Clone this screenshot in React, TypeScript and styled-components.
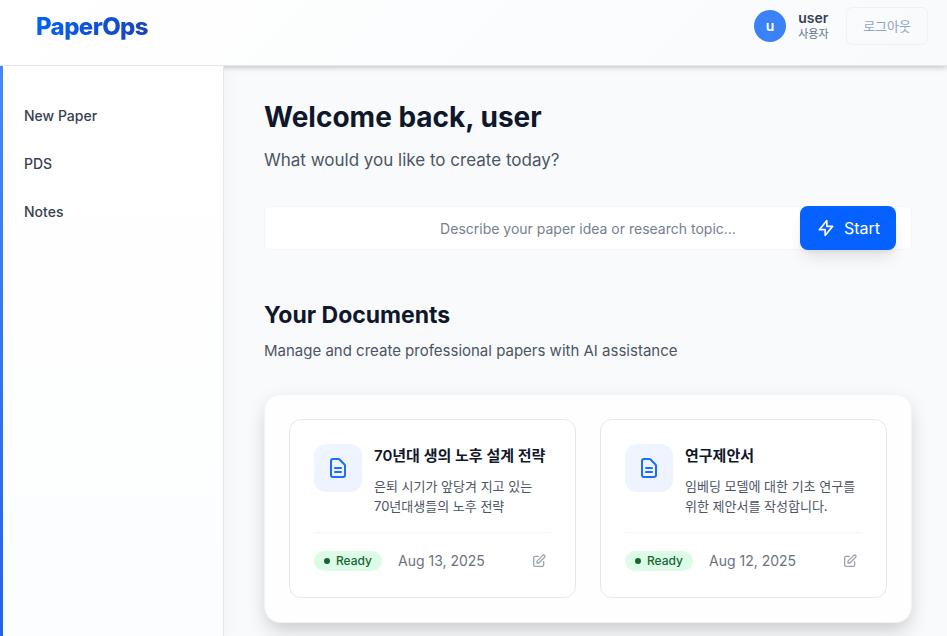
import React from "react";
import styled, { createGlobalStyle } from "styled-components";

const GlobalStyle = createGlobalStyle`
  *, *::before, *::after { box-sizing: border-box; }
  body {
    margin: 0;
    background: #f9fafc;
    color: #0f172a;
    font-family: Inter, "Noto Sans CJK KR", sans-serif;
    font-size: 14px;
    line-height: 20px;
  }
  h1, h2, h3, p { margin: 0; }
  button, input { font: inherit; }
`;

const Shell = styled.div`
  min-height: 100vh;
  display: flex;
  flex-direction: column;
`;

const Header = styled.header`
  display: flex;
  align-items: flex-start;
  justify-content: space-between;
  height: 66px;
  padding: 7px 19px 0 36px;
  background: linear-gradient(135deg, #ffffff 0%, #f8fafc 100%);
  border-bottom: 1px solid #e2e8f0;
  box-shadow: 0 1px 6px rgba(0, 0, 0, 0.25);
`;

const Logo = styled.a`
  font-size: 24px;
  line-height: 32px;
  margin-top: 4px;
  font-weight: 800;
  letter-spacing: -0.025em;
  text-decoration: none;
  color: transparent;
  background: linear-gradient(135deg, #0066ff 0%, #1e40af 100%);
  background-clip: text;
  -webkit-background-clip: text;
`;

const Account = styled.div`
  display: flex;
  align-items: center;
`;

const Avatar = styled.div`
  display: grid;
  place-items: center;
  width: 32px;
  height: 32px;
  margin-right: 12px;
  border-radius: 50%;
  background: #3b82f6;
  color: #fff;
  font-weight: 600;
`;

const Identity = styled.div`
  display: flex;
  flex-direction: column;
  min-width: 32px;
  margin-right: 16px;
`;

const UserName = styled.span`
  line-height: 16px;
  font-weight: 600;
  color: #334155;
`;

const Role = styled.span`
  font-size: 11px;
  line-height: 16px;
  color: #64748b;
`;

const LogoutButton = styled.button`
  height: 38px;
  padding: 0 16px;
  border: 1px solid #eef2f7;
  border-radius: 6px;
  background: transparent;
  color: #94a3c4;
  font-size: 13px;
  white-space: nowrap;
`;

const Body = styled.div`
  flex: 1;
  display: flex;
`;

const Sidebar = styled.nav`
  position: relative;
  flex: 0 0 224px;
  display: flex;
  flex-direction: column;
  gap: 8px;
  padding: 30px 12px 0 12px;
  border-right: 1px solid #e2e8f0;
  background:
    linear-gradient(180deg, #4488f7, #2563eb) left / 3px 100% no-repeat,
    linear-gradient(180deg, #ffffff, #fcfdfe);
  box-shadow: 4px 0 16px rgba(0, 0, 0, 0.03);
  clip-path: inset(0 -24px 0 0);
`;

const NavLink = styled.a`
  padding: 10px 12px;
  border-radius: 8px;
  font-weight: 500;
  color: #374151;
  text-decoration: none;
`;

const Main = styled.main`
  flex: 1;
  min-width: 0;
  padding: 31px 35px 12px 40px;
`;

const PageTitle = styled.h1`
  font-size: 28px;
  line-height: 40px;
  font-weight: 700;
`;

const Lead = styled.p`
  margin-top: 9px;
  font-size: 17px;
  line-height: 28px;
  color: #4b5563;
`;

const PromptForm = styled.form`
  display: grid;
  align-items: center;
  margin-top: 32px;
`;

const PromptInput = styled.input`
  grid-area: 1 / 1;
  width: 100%;
  height: 44px;
  padding: 0 120px;
  border: 1px solid #f1f4f9;
  border-radius: 6px;
  background: #fff;
  color: #0f172a;
  text-align: center;
  &::placeholder {
    color: #757f8f;
    opacity: 1;
  }
`;

const StartButton = styled.button`
  grid-area: 1 / 1;
  justify-self: end;
  z-index: 1;
  display: flex;
  align-items: center;
  gap: 8px;
  height: 44px;
  margin-right: 16px;
  padding: 0 16px;
  border: 0;
  border-radius: 8px;
  background: #0561ff;
  color: #fff;
  font-size: 16px;
  box-shadow: 0 10px 15px -3px rgba(0, 0, 0, 0.1), 0 4px 6px -4px rgba(0, 0, 0, 0.1);
`;

const SectionTitle = styled.h2`
  margin-top: 49px;
  font-size: 23px;
  line-height: 32px;
  font-weight: 700;
`;

const SectionNote = styled.p`
  margin-top: 8px;
  font-size: 15px;
  line-height: 24px;
  color: #4b5563;
`;

const Panel = styled.section`
  display: grid;
  grid-template-columns: repeat(auto-fit, minmax(260px, 1fr));
  gap: 24px;
  margin-top: 31px;
  padding: 24px;
  border: 1px solid #f1f3f6;
  border-radius: 16px;
  background: #fefefe;
  box-shadow: 0 10px 20px -4px rgba(0, 0, 0, 0.18), 0 4px 24px rgba(0, 0, 0, 0.04);
`;

const Card = styled.article`
  padding: 24px;
  border: 1px solid #e5e7eb;
  border-radius: 12px;
  background: #fff;
`;

const CardTop = styled.div`
  display: flex;
  gap: 12px;
  padding-bottom: 16px;
`;

const IconTile = styled.div`
  flex: 0 0 48px;
  display: grid;
  place-items: center;
  height: 48px;
  border-radius: 12px;
  background: linear-gradient(135deg, #eff6ff, #eef2ff);
  color: #1a6dff;
`;

const CardText = styled.div`
  min-width: 0;
`;

const CardTitle = styled.h3`
  font-size: 15px;
  line-height: 24px;
  font-weight: 600;
  white-space: nowrap;
`;

const Description = styled.p`
  margin-top: 8px;
  font-size: 13px;
  color: #4b5563;
  word-break: keep-all;
`;

const CardFooter = styled.footer`
  display: flex;
  align-items: center;
  padding-top: 16px;
  border-top: 1px solid #f1f3f5;
`;

const Badge = styled.span`
  display: flex;
  align-items: center;
  gap: 6px;
  margin-right: 16px;
  padding: 0 10px;
  border-radius: 10px;
  background: #dcfce7;
  color: #166534;
  font-size: 12px;
  font-weight: 500;
  &::before {
    content: "";
    width: 6px;
    height: 6px;
    border-radius: 50%;
    background: currentColor;
  }
`;

const DateText = styled.time`
  color: #6b7280;
`;

const EditButton = styled.button`
  display: flex;
  margin-left: auto;
  padding: 4px;
  border: 0;
  background: transparent;
  color: #9ca3af;
`;

const icons = {
  bolt: "M13 10V3L4 14h7v7l9-11h-7z",
  document:
    "M9 12h6m-6 4h6m2 5H7a2 2 0 01-2-2V5a2 2 0 012-2h5.586a1 1 0 01.707.293l5.414 5.414a1 1 0 01.293.707V19a2 2 0 01-2 2z",
  edit: "M11 5H6a2 2 0 00-2 2v11a2 2 0 002 2h11a2 2 0 002-2v-5m-1.414-9.414a2 2 0 112.828 2.828L11.828 15H9v-2.828l8.586-8.586z",
};

function Icon({ name, size }: { name: keyof typeof icons; size: number }) {
  return (
    <svg
      width={size}
      height={size}
      viewBox="0 0 24 24"
      fill="none"
      stroke="currentColor"
      strokeWidth={2}
      strokeLinecap="round"
      strokeLinejoin="round"
      aria-hidden="true"
    >
      <path d={icons[name]} />
    </svg>
  );
}

const navItems = ["New Paper", "PDS", "Notes"];

const documents = [
  {
    title: "70년대 생의 노후 설계 전략",
    description: "은퇴 시기가 앞당겨 지고 있는 70년대생들의 노후 전략",
    date: "Aug 13, 2025",
    iso: "2025-08-13",
  },
  {
    title: "연구제안서",
    description: "임베딩 모델에 대한 기초 연구를 위한 제안서를 작성합니다.",
    date: "Aug 12, 2025",
    iso: "2025-08-12",
  },
];

export default function App() {
  return (
    <Shell>
      <GlobalStyle />
      <Header>
        <Logo href="#">PaperOps</Logo>
        <Account>
          <Avatar>u</Avatar>
          <Identity>
            <UserName>user</UserName>
            <Role>사용자</Role>
          </Identity>
          <LogoutButton type="button">로그아웃</LogoutButton>
        </Account>
      </Header>
      <Body>
        <Sidebar>
          {navItems.map((item) => (
            <NavLink key={item} href="#">
              {item}
            </NavLink>
          ))}
        </Sidebar>
        <Main>
          <PageTitle>Welcome back, user</PageTitle>
          <Lead>What would you like to create today?</Lead>
          <PromptForm onSubmit={(e) => e.preventDefault()}>
            <PromptInput
              aria-label="Paper idea"
              placeholder="Describe your paper idea or research topic..."
            />
            <StartButton type="submit">
              <Icon name="bolt" size={20} />
              Start
            </StartButton>
          </PromptForm>
          <SectionTitle>Your Documents</SectionTitle>
          <SectionNote>Manage and create professional papers with AI assistance</SectionNote>
          <Panel>
            {documents.map((doc) => (
              <Card key={doc.iso}>
                <CardTop>
                  <IconTile>
                    <Icon name="document" size={24} />
                  </IconTile>
                  <CardText>
                    <CardTitle>{doc.title}</CardTitle>
                    <Description>{doc.description}</Description>
                  </CardText>
                </CardTop>
                <CardFooter>
                  <Badge>Ready</Badge>
                  <DateText dateTime={doc.iso}>{doc.date}</DateText>
                  <EditButton type="button" aria-label={`Edit ${doc.title}`}>
                    <Icon name="edit" size={16} />
                  </EditButton>
                </CardFooter>
              </Card>
            ))}
          </Panel>
        </Main>
      </Body>
    </Shell>
  );
}
